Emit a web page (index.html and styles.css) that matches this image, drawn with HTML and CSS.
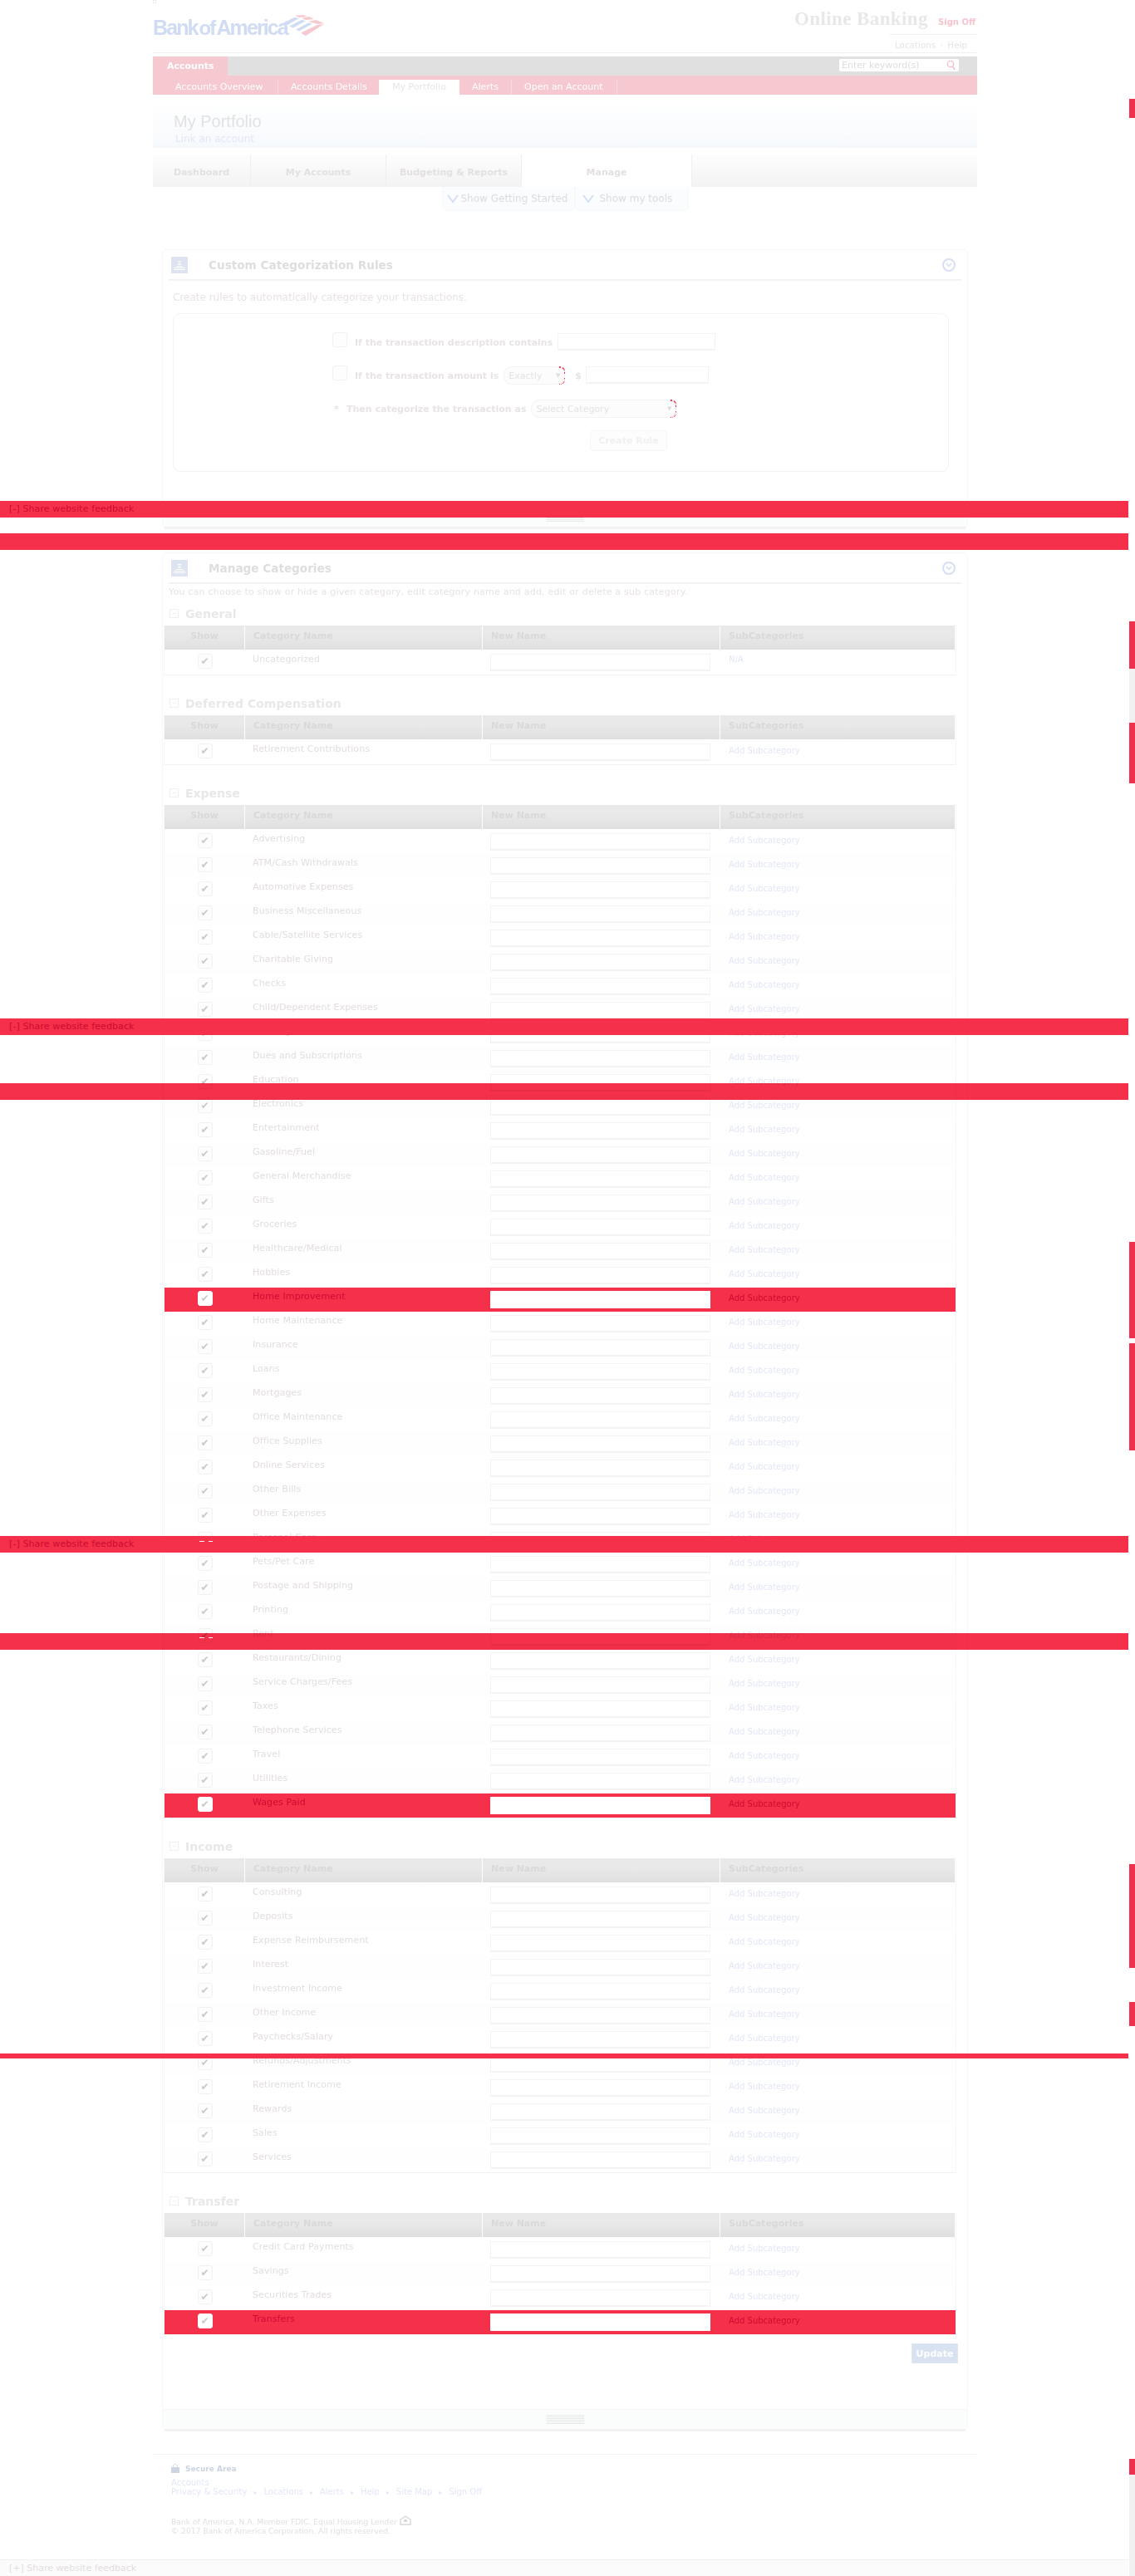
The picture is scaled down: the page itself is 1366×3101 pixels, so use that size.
FILE: index.html
```html
<!DOCTYPE html>
<html lang="en">
<head>
    <meta charset="UTF-8">
    <title>Bank of America | Online Banking | My Portfolio</title>
    <link rel="stylesheet" href="styles.css">
</head>
<body>
    <div class="page">
        <span class="broken-img"></span>
        <header class="top">
            <div class="logo">
                <span class="logo-text">Bank<span class="logo-gap">of</span>America</span>
                <svg class="logo-flag" width="50" height="27" viewBox="0 0 50 27">
                    <path d="M0 10 L14 3 L20 4 L6 12 Z M8 13.5 L23 6 L28 7 L13 15.5 Z M16 17.5 L31 9.5 L36 10.5 L20 19.5 Z" fill="#cfdcf3"/>
                    <path d="M15 1 L25 0 L30 2 L20 3 Z M23 4 L32 2 L38 5 L28 6 Z M31 8 L40 6 L50 10 L43 11 Z" fill="#f6c9d0"/>
                    <path d="M23 21 L42 12 L50 11 L28 25 L24 23 Z" fill="#f6c9d0"/>
                </svg>
            </div>
            <div class="top-right">
                <div class="online-row">
                    <span class="online-title">Online Banking</span>
                    <a class="sign-off">Sign Off</a>
                </div>
                <div class="top-links">Locations <span class="dot">&middot;</span> Help</div>
            </div>
        </header>

        <nav class="main-nav">
            <a class="main-tab">Accounts</a>
            <div class="search">
                <input type="text" placeholder="Enter keyword(s)">
                <svg width="12" height="13" viewBox="0 0 12 13"><circle cx="5" cy="5" r="3.6" fill="none" stroke="#f6c0c9" stroke-width="1.4"/><path d="M7.5 8 L10 12" stroke="#f6c0c9" stroke-width="1.6"/></svg>
            </div>
        </nav>
        <nav class="sub-nav">
            <a class="sub-overview">Accounts Overview</a>
            <a class="sub-details">Accounts Details</a>
            <a class="active">My Portfolio</a>
            <a class="sub-alerts">Alerts</a>
            <a class="sub-open">Open an Account</a>
        </nav>

        <div class="title-bar">
            <h1>My Portfolio</h1>
            <a>Link an account</a>
        </div>

        <div class="tabs">
            <a class="tab-dash">Dashboard</a>
            <a class="tab-wide">My Accounts</a>
            <a class="tab-wide">Budgeting &amp; Reports</a>
            <a class="tab-manage">Manage</a>
        </div>
        <div class="tools">
            <a class="tool tool-start"><svg width="14" height="11" viewBox="0 0 14 11"><path d="M1 1 L7 9 L13 1" fill="none" stroke="#d5dff5" stroke-width="2"/></svg>Show Getting Started</a>
            <a class="tool tool-mine"><svg width="14" height="11" viewBox="0 0 14 11"><path d="M1 1 L7 9 L13 1" fill="none" stroke="#d5dff5" stroke-width="2"/></svg>Show my tools</a>
        </div>

        <section class="panel panel-rules">
            <div class="panel-head">
                <svg class="panel-icon" width="20" height="20" viewBox="0 0 20 20"><rect width="20" height="20" fill="#dde3f0"/><path d="M8 5h4v1H8zM8 7h4v1H8zM8 9h4v1H8zM6 11h8v1H6zM3 13h14v1H3zM3 15h14v1H3z" fill="#fff"/></svg>
                <h2>Custom Categorization Rules</h2>
                <span class="collapse"><svg width="8" height="6" viewBox="0 0 8 6"><path d="M1 1 L4 4.5 L7 1" fill="none" stroke="#d5dff5" stroke-width="1.6"/></svg></span>
            </div>
            <p class="panel-intro">Create rules to automatically categorize your transactions.</p>
            <div class="rule-box">
                <div class="rule-row">
                    <span class="check"></span>
                    <label>If the transaction description contains</label>
                    <input class="rule-input rule-input-desc" type="text">
                </div>
                <div class="rule-row">
                    <span class="check"></span>
                    <label>If the transaction amount is</label>
                    <div class="select select-short">Exactly<span class="arrow">&#9660;</span></div>
                    <span class="dollar">$</span>
                    <input class="rule-input rule-input-amount" type="text">
                </div>
                <div class="rule-row">
                    <span class="required">*</span>
                    <label>Then categorize the transaction as</label>
                    <div class="select select-long">Select Category<span class="arrow">&#9660;</span></div>
                </div>
                <div class="rule-action"><button class="btn-create">Create Rule</button></div>
            </div>
            <div class="panel-foot"><span class="handle handle-short"></span></div>
        </section>

        <section class="panel panel-manage">
            <div class="panel-head">
                <svg class="panel-icon" width="20" height="20" viewBox="0 0 20 20"><rect width="20" height="20" fill="#dde3f0"/><path d="M8 5h4v1H8zM8 7h4v1H8zM8 9h4v1H8zM6 11h8v1H6zM3 13h14v1H3zM3 15h14v1H3z" fill="#fff"/></svg>
                <h2>Manage Categories</h2>
                <span class="collapse"><svg width="8" height="6" viewBox="0 0 8 6"><path d="M1 1 L4 4.5 L7 1" fill="none" stroke="#d5dff5" stroke-width="1.6"/></svg></span>
            </div>
            <p class="panel-intro panel-intro-tight">You can choose to show or hide a given category, edit category name and add, edit or delete a sub category.</p>

            <div class="cat-section">
                <h3><span class="minus">-</span>General</h3>
                <table class="cat-table">
                    <thead><tr><th>Show</th><th>Category Name</th><th>New Name</th><th>SubCategories</th></tr></thead>
                    <tbody>
                        <tr><td><span class="check">&#10004;</span></td><td>Uncategorized</td><td><input type="text"></td><td class="na">N/A</td></tr>
                    </tbody>
                </table>
            </div>

            <div class="cat-section">
                <h3><span class="minus">-</span>Deferred Compensation</h3>
                <table class="cat-table">
                    <thead><tr><th>Show</th><th>Category Name</th><th>New Name</th><th>SubCategories</th></tr></thead>
                    <tbody>
                        <tr><td><span class="check">&#10004;</span></td><td>Retirement Contributions</td><td><input type="text"></td><td><a>Add Subcategory</a></td></tr>
                    </tbody>
                </table>
            </div>

            <div class="cat-section">
                <h3><span class="minus">-</span>Expense</h3>
                <table class="cat-table">
                    <thead><tr><th>Show</th><th>Category Name</th><th>New Name</th><th>SubCategories</th></tr></thead>
                    <tbody>
                        <tr><td><span class="check">&#10004;</span></td><td>Advertising</td><td><input type="text"></td><td><a>Add Subcategory</a></td></tr>
                        <tr><td><span class="check">&#10004;</span></td><td>ATM/Cash Withdrawals</td><td><input type="text"></td><td><a>Add Subcategory</a></td></tr>
                        <tr><td><span class="check">&#10004;</span></td><td>Automotive Expenses</td><td><input type="text"></td><td><a>Add Subcategory</a></td></tr>
                        <tr><td><span class="check">&#10004;</span></td><td>Business Miscellaneous</td><td><input type="text"></td><td><a>Add Subcategory</a></td></tr>
                        <tr><td><span class="check">&#10004;</span></td><td>Cable/Satellite Services</td><td><input type="text"></td><td><a>Add Subcategory</a></td></tr>
                        <tr><td><span class="check">&#10004;</span></td><td>Charitable Giving</td><td><input type="text"></td><td><a>Add Subcategory</a></td></tr>
                        <tr><td><span class="check">&#10004;</span></td><td>Checks</td><td><input type="text"></td><td><a>Add Subcategory</a></td></tr>
                        <tr><td><span class="check">&#10004;</span></td><td>Child/Dependent Expenses</td><td><input type="text"></td><td><a>Add Subcategory</a></td></tr>
                        <tr><td><span class="check">&#10004;</span></td><td>Clothing/Shoes</td><td><input type="text"></td><td><a>Add Subcategory</a></td></tr>
                        <tr><td><span class="check">&#10004;</span></td><td>Dues and Subscriptions</td><td><input type="text"></td><td><a>Add Subcategory</a></td></tr>
                        <tr><td><span class="check">&#10004;</span></td><td>Education</td><td><input type="text"></td><td><a>Add Subcategory</a></td></tr>
                        <tr><td><span class="check">&#10004;</span></td><td>Electronics</td><td><input type="text"></td><td><a>Add Subcategory</a></td></tr>
                        <tr><td><span class="check">&#10004;</span></td><td>Entertainment</td><td><input type="text"></td><td><a>Add Subcategory</a></td></tr>
                        <tr><td><span class="check">&#10004;</span></td><td>Gasoline/Fuel</td><td><input type="text"></td><td><a>Add Subcategory</a></td></tr>
                        <tr><td><span class="check">&#10004;</span></td><td>General Merchandise</td><td><input type="text"></td><td><a>Add Subcategory</a></td></tr>
                        <tr><td><span class="check">&#10004;</span></td><td>Gifts</td><td><input type="text"></td><td><a>Add Subcategory</a></td></tr>
                        <tr><td><span class="check">&#10004;</span></td><td>Groceries</td><td><input type="text"></td><td><a>Add Subcategory</a></td></tr>
                        <tr><td><span class="check">&#10004;</span></td><td>Healthcare/Medical</td><td><input type="text"></td><td><a>Add Subcategory</a></td></tr>
                        <tr><td><span class="check">&#10004;</span></td><td>Hobbies</td><td><input type="text"></td><td><a>Add Subcategory</a></td></tr>
                        <tr class="flagged"><td><span class="check">&#10004;</span></td><td>Home Improvement</td><td><input type="text"></td><td><a>Add Subcategory</a></td></tr>
                        <tr><td><span class="check">&#10004;</span></td><td>Home Maintenance</td><td><input type="text"></td><td><a>Add Subcategory</a></td></tr>
                        <tr><td><span class="check">&#10004;</span></td><td>Insurance</td><td><input type="text"></td><td><a>Add Subcategory</a></td></tr>
                        <tr><td><span class="check">&#10004;</span></td><td>Loans</td><td><input type="text"></td><td><a>Add Subcategory</a></td></tr>
                        <tr><td><span class="check">&#10004;</span></td><td>Mortgages</td><td><input type="text"></td><td><a>Add Subcategory</a></td></tr>
                        <tr><td><span class="check">&#10004;</span></td><td>Office Maintenance</td><td><input type="text"></td><td><a>Add Subcategory</a></td></tr>
                        <tr><td><span class="check">&#10004;</span></td><td>Office Supplies</td><td><input type="text"></td><td><a>Add Subcategory</a></td></tr>
                        <tr><td><span class="check">&#10004;</span></td><td>Online Services</td><td><input type="text"></td><td><a>Add Subcategory</a></td></tr>
                        <tr><td><span class="check">&#10004;</span></td><td>Other Bills</td><td><input type="text"></td><td><a>Add Subcategory</a></td></tr>
                        <tr><td><span class="check">&#10004;</span></td><td>Other Expenses</td><td><input type="text"></td><td><a>Add Subcategory</a></td></tr>
                        <tr><td><span class="check">&#10004;</span></td><td>Personal Care</td><td><input type="text"></td><td><a>Add Subcategory</a></td></tr>
                        <tr><td><span class="check">&#10004;</span></td><td>Pets/Pet Care</td><td><input type="text"></td><td><a>Add Subcategory</a></td></tr>
                        <tr><td><span class="check">&#10004;</span></td><td>Postage and Shipping</td><td><input type="text"></td><td><a>Add Subcategory</a></td></tr>
                        <tr><td><span class="check">&#10004;</span></td><td>Printing</td><td><input type="text"></td><td><a>Add Subcategory</a></td></tr>
                        <tr><td><span class="check">&#10004;</span></td><td>Rent</td><td><input type="text"></td><td><a>Add Subcategory</a></td></tr>
                        <tr><td><span class="check">&#10004;</span></td><td>Restaurants/Dining</td><td><input type="text"></td><td><a>Add Subcategory</a></td></tr>
                        <tr><td><span class="check">&#10004;</span></td><td>Service Charges/Fees</td><td><input type="text"></td><td><a>Add Subcategory</a></td></tr>
                        <tr><td><span class="check">&#10004;</span></td><td>Taxes</td><td><input type="text"></td><td><a>Add Subcategory</a></td></tr>
                        <tr><td><span class="check">&#10004;</span></td><td>Telephone Services</td><td><input type="text"></td><td><a>Add Subcategory</a></td></tr>
                        <tr><td><span class="check">&#10004;</span></td><td>Travel</td><td><input type="text"></td><td><a>Add Subcategory</a></td></tr>
                        <tr><td><span class="check">&#10004;</span></td><td>Utilities</td><td><input type="text"></td><td><a>Add Subcategory</a></td></tr>
                        <tr class="flagged"><td><span class="check">&#10004;</span></td><td>Wages Paid</td><td><input type="text"></td><td><a>Add Subcategory</a></td></tr>
                    </tbody>
                </table>
            </div>

            <div class="cat-section">
                <h3><span class="minus">-</span>Income</h3>
                <table class="cat-table">
                    <thead><tr><th>Show</th><th>Category Name</th><th>New Name</th><th>SubCategories</th></tr></thead>
                    <tbody>
                        <tr><td><span class="check">&#10004;</span></td><td>Consulting</td><td><input type="text"></td><td><a>Add Subcategory</a></td></tr>
                        <tr><td><span class="check">&#10004;</span></td><td>Deposits</td><td><input type="text"></td><td><a>Add Subcategory</a></td></tr>
                        <tr><td><span class="check">&#10004;</span></td><td>Expense Reimbursement</td><td><input type="text"></td><td><a>Add Subcategory</a></td></tr>
                        <tr><td><span class="check">&#10004;</span></td><td>Interest</td><td><input type="text"></td><td><a>Add Subcategory</a></td></tr>
                        <tr><td><span class="check">&#10004;</span></td><td>Investment Income</td><td><input type="text"></td><td><a>Add Subcategory</a></td></tr>
                        <tr><td><span class="check">&#10004;</span></td><td>Other Income</td><td><input type="text"></td><td><a>Add Subcategory</a></td></tr>
                        <tr><td><span class="check">&#10004;</span></td><td>Paychecks/Salary</td><td><input type="text"></td><td><a>Add Subcategory</a></td></tr>
                        <tr><td><span class="check">&#10004;</span></td><td>Refunds/Adjustments</td><td><input type="text"></td><td><a>Add Subcategory</a></td></tr>
                        <tr><td><span class="check">&#10004;</span></td><td>Retirement Income</td><td><input type="text"></td><td><a>Add Subcategory</a></td></tr>
                        <tr><td><span class="check">&#10004;</span></td><td>Rewards</td><td><input type="text"></td><td><a>Add Subcategory</a></td></tr>
                        <tr><td><span class="check">&#10004;</span></td><td>Sales</td><td><input type="text"></td><td><a>Add Subcategory</a></td></tr>
                        <tr><td><span class="check">&#10004;</span></td><td>Services</td><td><input type="text"></td><td><a>Add Subcategory</a></td></tr>
                    </tbody>
                </table>
            </div>

            <div class="cat-section">
                <h3><span class="minus">-</span>Transfer</h3>
                <table class="cat-table">
                    <thead><tr><th>Show</th><th>Category Name</th><th>New Name</th><th>SubCategories</th></tr></thead>
                    <tbody>
                        <tr><td><span class="check">&#10004;</span></td><td>Credit Card Payments</td><td><input type="text"></td><td><a>Add Subcategory</a></td></tr>
                        <tr><td><span class="check">&#10004;</span></td><td>Savings</td><td><input type="text"></td><td><a>Add Subcategory</a></td></tr>
                        <tr><td><span class="check">&#10004;</span></td><td>Securities Trades</td><td><input type="text"></td><td><a>Add Subcategory</a></td></tr>
                        <tr class="flagged"><td><span class="check">&#10004;</span></td><td>Transfers</td><td><input type="text"></td><td><a>Add Subcategory</a></td></tr>
                    </tbody>
                </table>
            </div>

            <div class="update-row"><button class="btn-update">Update</button></div>
            <div class="panel-foot"><span class="handle"></span></div>
        </section>

        <footer class="site-foot">
            <div class="secure">
                <svg width="10" height="12" viewBox="0 0 10 12"><path d="M2.5 5 V2.5 Q5 0 7.5 2.5 V5" fill="none" stroke="#dbe0e8" stroke-width="1"/><rect y="5" width="10" height="7" fill="#cdd5e2"/></svg>
                <strong>Secure Area</strong>
            </div>
            <div class="foot-links">
                <div>Accounts</div>
                <div>Privacy &amp; Security<i>&#9656;</i>Locations<i>&#9656;</i>Alerts<i>&#9656;</i>Help<i>&#9656;</i>Site Map<i>&#9656;</i>Sign Off</div>
            </div>
            <div class="legal">
                <div>Bank of America, N.A. Member FDIC. Equal Housing Lender
                    <svg width="14" height="12" viewBox="0 0 14 12"><path d="M7 1 L13 5 V11 H1 V5 Z" fill="none" stroke="#d8d8d8" stroke-width="1.4"/><rect x="5" y="5" width="4" height="3" fill="#d8d8d8"/></svg>
                </div>
                <div>&copy; 2017 Bank of America Corporation. All rights reserved.</div>
            </div>
        </footer>

        <!-- feedback tab copies left over from the long capture -->
        <div class="band band-1"><span>[-]</span> Share website feedback</div>
        <div class="band band-2 band-see"></div>
        <div class="band band-3"><span>[-]</span> Share website feedback</div>
        <div class="band band-4 band-see"></div>
        <div class="band band-5"><span>[-]</span> Share website feedback</div>
        <div class="band band-6 band-see"></div>
        <div class="band band-7"></div>
        <span class="dash dash-1"></span>
        <span class="dash dash-2"></span>
        <div class="feedback-bar"><span>[+]</span> Share website feedback</div>

        <span class="bar-seg bar-1"></span>
        <span class="bar-seg bar-2"></span>
        <span class="bar-seg bar-3"></span>
        <span class="bar-seg bar-4"></span>
        <span class="bar-seg bar-5"></span>
        <span class="bar-seg bar-6"></span>
        <span class="bar-seg bar-7"></span>
        <span class="bar-seg bar-8"></span>
        <span class="bar-track bar-track-1"></span>
        <span class="bar-track bar-track-2"></span>
    </div>
</body>
</html>
```
FILE: styles.css
```css
:root {
    --flag-red: #f4304a;
    --flag-text: #cc0c30;
    --pink: #f6c9d0;
    --link: #e3e7f7;
    --text: #e3dee0;
    --muted: #e2e2e2;
    --edge: #f3f3f3;
}

* {
    box-sizing: border-box;
}

html, body {
    margin: 0;
    padding: 0;
    background: #fff;
}

body {
    font-family: "DejaVu Sans", Verdana, sans-serif;
    font-size: 11px;
    color: var(--text);
}

.page {
    position: relative;
    width: 1366px;
    height: 3101px;
    padding-left: 184px;
    overflow: hidden;
}

.page > header, .page > nav, .title-bar, .tabs, .tools, .site-foot {
    width: 992px;
}

.broken-img {
    position: absolute;
    left: 184px;
    top: 0;
    width: 4px;
    height: 4px;
    border: 1px solid #eee;
}

/* top */
.top {
    display: flex;
    justify-content: space-between;
    height: 64px;
    border-bottom: 1px solid #f0f0f0;
    margin-bottom: 4px;
}

.logo {
    display: flex;
    align-items: flex-start;
    padding-top: 18px;
}

.logo-text {
    display: inline-block;
    width: 156px;
    white-space: nowrap;
    font-family: "Liberation Sans", Arial, sans-serif;
    font-weight: 700;
    font-size: 25px;
    line-height: 30px;
    letter-spacing: -1.9px;
    color: #cfdcf3;
}

.logo-gap {
    margin: 0 2px;
    font-size: 24px;
}

.logo-flag {
    flex: none;
}

.top-right {
    width: 220px;
    padding-top: 10px;
}

.online-row {
    display: flex;
    align-items: flex-end;
    justify-content: space-between;
    padding-right: 2px;
}

.online-title {
    font-family: "Liberation Serif", "Times New Roman", serif;
    font-weight: 700;
    font-size: 23px;
    line-height: 26px;
    letter-spacing: 0.4px;
    color: #e8e8e8;
}

.sign-off {
    font-weight: 700;
    font-size: 10px;
    line-height: 18px;
    color: #f8c4cd;
}

.top-links {
    margin: 5px 0 0 114px;
    padding: 7px 0 0 7px;
    border-top: 1px solid #f2f2f2;
    font-size: 10px;
    letter-spacing: 0.2px;
    color: #e4e4e4;
}

.dot {
    margin: 0 2px;
}

/* navigation */
.main-nav {
    display: flex;
    justify-content: space-between;
    height: 23px;
    background: #e0e0e0;
}

.main-tab {
    width: 90px;
    padding-left: 17px;
    background: var(--pink);
    font-weight: 700;
    font-size: 11px;
    line-height: 23px;
    color: #fff;
}

.search {
    display: flex;
    align-items: center;
    justify-content: space-between;
    width: 144px;
    height: 15px;
    margin: 3px 22px 0 0;
    padding: 0 3px;
    background: #fff;
    border-radius: 2px;
}

.search input {
    width: 115px;
    border: 0;
    padding: 0;
    font: 11px "DejaVu Sans", Verdana, sans-serif;
    background: transparent;
}

.search input::placeholder {
    color: #ddd;
    opacity: 1;
}

.sub-nav {
    display: flex;
    height: 23px;
    padding-left: 12px;
    background: var(--pink);
}

.sub-nav a {
    height: 18px;
    margin-top: 5px;
    padding-left: 15px;
    border-right: 1px solid #f9d9de;
    line-height: 17px;
    color: #fff;
}

.sub-nav .sub-overview {
    width: 139px;
}

.sub-nav .sub-details {
    width: 121px;
    border-right: 0;
}

.sub-nav a.active {
    width: 97px;
    padding-left: 0;
    border-right: 0;
    background: #fff;
    text-align: center;
    color: #e6e6e6;
}

.sub-nav .sub-alerts {
    width: 63px;
}

.sub-nav .sub-open {
    width: 127px;
}

.title-bar {
    height: 56px;
    margin-top: 8px;
    padding: 13px 0 0 25px;
    background: linear-gradient(#fff, #f6f9fc);
}

.title-bar h1 {
    margin: 0;
    font-family: "Liberation Sans", Arial, sans-serif;
    font-weight: 400;
    font-size: 20px;
    line-height: 22px;
    color: #e2e2e2;
}

.title-bar a {
    display: block;
    margin: 2px 0 0 2px;
    font-size: 12px;
    line-height: 16px;
    color: var(--link);
}

/* tabs */
.tabs {
    display: flex;
    height: 39px;
    margin-top: 8px;
    background: linear-gradient(#fdfdfd, #f3f3f3);
}

.tabs a {
    height: 39px;
    border-right: 1px solid #efefef;
    font-weight: 700;
    font-size: 11px;
    line-height: 44px;
    text-align: center;
    color: #e4e0e0;
}

.tab-dash {
    width: 118px;
}

.tab-wide {
    width: 163px;
}

.tabs .tab-manage {
    width: 205px;
    background: #fff;
}

.tools {
    display: flex;
    justify-content: center;
    height: 29px;
}

.tool {
    display: flex;
    align-items: center;
    height: 29px;
    padding-left: 5px;
    background: #fbfcfd;
    border: 1px solid #f7f8f9;
    border-top: 0;
    border-radius: 0 0 5px 5px;
    font-weight: 400;
    font-size: 12px;
    color: #dcdcdc;
}

.tool svg {
    margin-right: 3px;
}

.tool-start {
    width: 160px;
}

.tool-mine {
    width: 137px;
    padding-left: 8px;
}

.tool-mine svg {
    margin-right: 7px;
}

/* panels */
.panel {
    position: relative;
    width: 970px;
    margin-left: 11px;
    border: 1px solid #f7f7f7;
    border-radius: 5px;
    background: #fff;
}

.panel::after {
    content: "";
    position: absolute;
    left: 2px;
    right: 2px;
    bottom: -3px;
    height: 3px;
    background: #f2f2f2;
}

.panel-rules {
    height: 335px;
    margin-top: 46px;
}

.panel-manage {
    height: 2260px;
    margin-top: 30px;
}

.panel-head {
    display: flex;
    align-items: center;
    height: 37px;
    margin: 0 7px;
    padding: 0 7px 0 3px;
    border-bottom: 2px solid #f3f3f3;
}

.panel-icon {
    flex: none;
    margin: 0;
}

.panel-head h2 {
    flex: 1;
    margin: 0 0 0 25px;
    font-weight: 700;
    font-size: 13.6px;
    color: #dedede;
}

.collapse {
    display: flex;
    align-items: center;
    justify-content: center;
    width: 16px;
    height: 16px;
    border: 2px solid #d5dff5;
    border-radius: 50%;
}

.panel-intro {
    margin: 0;
    padding: 12px 0 0 12px;
    line-height: 16px;
    font-size: 12px;
    color: #e8e2e4;
}

.panel-intro-tight {
    height: 21px;
    padding: 2px 0 0 7px;
    font-size: 11px;
    letter-spacing: 0.22px;
}

.rule-box {
    width: 934px;
    height: 191px;
    margin: 11px 0 0 12px;
    padding: 20px 0 0 191px;
    border: 1px solid #f3f3f3;
    border-radius: 9px;
}

.rule-row {
    display: flex;
    align-items: center;
    height: 24px;
    margin-bottom: 16px;
}

.rule-row label {
    margin: 4px 0 0 9px;
    font-weight: 700;
    font-size: 11px;
    color: #e8e4e4;
}

.check {
    display: inline-block;
    flex: none;
    width: 18px;
    height: 18px;
    border: 1px solid #f1f1f1;
    border-radius: 3px;
    background: #fdfdfd;
    line-height: 16px;
    font-size: 12px;
    text-align: center;
    color: #c9c9c9;
}

.rule-row .check {
    margin-top: -2px;
}

.required {
    width: 10px;
    margin: 4px 0 0 2px;
    font-weight: 700;
    color: #e4e4e4;
}

.rule-row .required + label {
    margin-left: 5px;
}

.rule-input {
    height: 21px;
    margin: 3px 0 0 6px;
    border: 1px solid var(--edge);
    border-bottom-width: 2px;
}

.rule-input-desc {
    width: 190px;
}

.rule-input-amount {
    width: 148px;
    margin-left: 5px;
}

.select {
    position: relative;
    display: flex;
    justify-content: space-between;
    align-items: center;
    height: 22px;
    margin: 4px 0 0 6px;
    padding: 0 5px;
    border: 1px solid #f3f3f3;
    border-radius: 10px;
    background: #fcfcfc;
    color: #e3e3e3;
}

.arrow {
    font-size: 7px;
    color: #dcdcdc;
}

/* small scraps of red left at the right corners of the selects */
.select::before, .select::after {
    content: "";
    position: absolute;
    right: -1px;
    width: 6px;
    height: 7px;
    border-right: 1px dashed var(--flag-red);
}

.select::before {
    top: -1px;
    border-top: 2px dotted var(--flag-red);
    border-top-right-radius: 6px;
}

.select::after {
    bottom: -1px;
    border-bottom: 1px dotted var(--flag-red);
    border-bottom-right-radius: 6px;
}

.select-short {
    width: 74px;
}

.select-long {
    width: 175px;
}

.dollar {
    margin: 4px 0 0 12px;
    font-weight: 700;
    color: #e4e4e4;
}

.rule-action {
    padding: 0 0 0 310px;
    margin-top: 1px;
}

.btn-create {
    width: 93px;
    height: 25px;
    padding: 0;
    border: 1px solid #f5f5f5;
    border-radius: 4px;
    background: #fdfdfd;
    font: 700 11px "DejaVu Sans", Verdana, sans-serif;
    color: #f0f0f0;
}

.panel-foot {
    position: absolute;
    left: 0;
    right: 0;
    bottom: 0;
    display: flex;
    justify-content: center;
    height: 24px;
    padding-top: 6px;
    border-top: 1px solid #f6f6f6;
    background: #fbfcfc;
}

.handle {
    width: 45px;
    height: 11px;
    background: repeating-linear-gradient(#e8e8e8 0 1px, #fbfcfc 1px 2px);
}

/* categories */
.cat-section {
    width: 954px;
    margin: 0 0 19px 1px;
}

.cat-section h3 {
    display: flex;
    align-items: center;
    height: 29px;
    margin: 0;
    padding-left: 7px;
    font-weight: 700;
    font-size: 14px;
    color: #e8e8e8;
}

.minus {
    display: inline-block;
    width: 11px;
    height: 11px;
    margin-right: 8px;
    border: 1px solid #f0f0f0;
    font-weight: 400;
    font-size: 9px;
    line-height: 8px;
    text-align: center;
    color: #e4e4e4;
}

.cat-table {
    width: 954px;
    border-collapse: separate;
    border-spacing: 0;
    table-layout: fixed;
    border-bottom: 1px solid #f2f2f2;
    border-left: 1px solid #f7f7f7;
    border-right: 1px solid #f7f7f7;
}

.cat-table th {
    height: 30px;
    padding: 0 0 4px 10px;
    border-right: 1px solid #fff;
    border-bottom: 1px solid #fff;
    background: linear-gradient(#e9e9e9 40%, #dfdfdf);
    font-weight: 700;
    font-size: 11px;
    text-align: left;
    color: #d9d9d9;
}

.cat-table th:first-child {
    width: 97px;
    padding: 0 0 4px;
    text-align: center;
}

.cat-table th:nth-child(2), .cat-table th:nth-child(3) {
    width: 286px;
}

.cat-table td {
    height: 29px;
    padding: 0 0 0 9px;
    vertical-align: top;
    line-height: 22px;
    letter-spacing: 0.1px;
}

.cat-table td:first-child {
    padding: 4px 0 0;
    text-align: center;
    line-height: 0;
}

.cat-table td:nth-child(3) {
    padding-top: 4px;
    line-height: 0;
}

.cat-table td:nth-child(4) {
    padding-left: 10px;
    font-size: 10px;
    line-height: 26px;
    letter-spacing: 0;
    color: var(--link);
}

.cat-table td.na {
    line-height: 22px;
}

.cat-table tbody tr:nth-child(even) {
    background: #fefefe;
}

.cat-table input {
    width: 265px;
    height: 21px;
    border: 1px solid var(--edge);
    border-bottom-width: 2px;
    background: #fff;
}

.cat-table a {
    color: var(--link);
}

.cat-table tbody tr.flagged {
    background: var(--flag-red);
    color: var(--flag-text);
}

.flagged a, .cat-table .flagged td:nth-child(4) {
    color: var(--flag-text);
}

.flagged .check {
    background: #fff;
    border-color: #fff;
}

.flagged input {
    border-color: #fff;
}

.update-row {
    display: flex;
    justify-content: flex-end;
    width: 957px;
    margin-top: -9px;
}

.btn-update {
    width: 56px;
    height: 24px;
    padding: 0;
    border: 1px solid #dfe7f2;
    background: #d8e2f0;
    font: 700 11px "DejaVu Sans", Verdana, sans-serif;
    color: #fff;
}

/* footer */
.site-foot {
    margin-top: 29px;
    padding: 8px 0 0 22px;
    border-top: 1px solid #f2f2f2;
    font-size: 9.2px;
}

.secure {
    display: flex;
    align-items: flex-end;
    height: 14px;
}

.secure strong {
    margin-left: 7px;
    font-size: 9px;
    color: #ccd4e0;
}

.foot-links {
    margin-top: 6px;
    font-size: 10px;
    line-height: 11px;
    color: var(--link);
}

.foot-links i {
    margin: 0 8px;
    font-style: normal;
    font-size: 8px;
}

.legal {
    margin-top: 22px;
    line-height: 11px;
    color: #e2e0e0;
}

.legal svg {
    vertical-align: -1px;
}

/* red strips over the page */
.band {
    position: absolute;
    left: 0;
    width: 1358px;
    height: 20px;
    padding-left: 11px;
    background: var(--flag-red);
    line-height: 20px;
    color: var(--flag-text);
    letter-spacing: 0.1px;
}

.band-see {
    mix-blend-mode: multiply;
}

.band-1 { top: 603px; }
.band-2 { top: 642px; }
.band-3 { top: 1226px; }
.band-4 { top: 1304px; }
.band-5 { top: 1849px; }
.band-6 { top: 1966px; }
.band-7 { top: 2472px; height: 6px; }

.dash {
    position: absolute;
    left: 240px;
    width: 16px;
    height: 1px;
    background: linear-gradient(90deg, #fff 0 6px, transparent 6px 11px, #fff 11px);
}

.dash-1 { top: 1855px; }
.dash-2 { top: 1971px; }

.feedback-bar {
    position: absolute;
    left: 0;
    top: 3081px;
    width: 1358px;
    height: 20px;
    padding-left: 11px;
    background: #fbfbfb;
    border-top: 1px solid #efefef;
    line-height: 20px;
    color: #e3dee0;
}

.bar-seg {
    position: absolute;
    left: 1359px;
    width: 7px;
    background: #f0314d;
}

.bar-track {
    position: absolute;
    left: 1359px;
    width: 7px;
    background: #f1f1f1;
}

.bar-1 { top: 119px; height: 23px; }
.bar-2 { top: 748px; height: 57px; }
.bar-3 { top: 870px; height: 73px; }
.bar-4 { top: 1495px; height: 116px; }
.bar-5 { top: 1617px; height: 129px; }
.bar-6 { top: 2244px; height: 125px; }
.bar-7 { top: 2410px; height: 29px; }
.bar-8 { top: 2960px; height: 19px; }
.bar-track-1 { top: 805px; height: 65px; }
.bar-track-2 { top: 2979px; height: 122px; }
```
